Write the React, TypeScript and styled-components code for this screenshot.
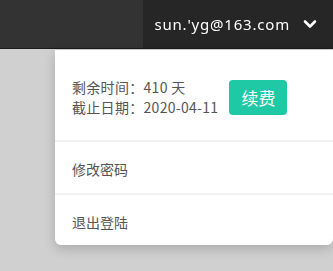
import styled, { createGlobalStyle } from 'styled-components';

const GlobalStyle = createGlobalStyle`
  html, body {
    margin: 0;
    padding: 0;
    background: #d0d0d0;
    font-family: "Noto Sans", "Noto Sans CJK SC", sans-serif;
  }
`;

const Page = styled.div`
  position: relative;
  width: 333px;
  height: 271px;
  background: #d0d0d0;
  overflow: hidden;
`;

const Header = styled.header`
  display: flex;
  height: 48px;
  border-bottom: 1px solid #1c1c1c;
`;

const HeaderLeft = styled.div`
  width: 143px;
  background: #333333;
`;

const UserArea = styled.div`
  flex: 1;
  display: flex;
  align-items: center;
  justify-content: flex-end;
  gap: 13px;
  padding-right: 16px;
  background: #262626;
  color: #fff;
`;

const Email = styled.span`
  font-size: 15px;
  letter-spacing: 0.8px;
  filter: blur(0.6px);
`;

const Dropdown = styled.div`
  position: absolute;
  top: 50px;
  left: 55px;
  right: 0;
  background: #fff;
  border-radius: 0 0 6px 6px;
  box-shadow: 0 4px 12px rgba(0, 0, 0, 0.18);
  font-family: "Noto Sans CJK SC", "Noto Sans", sans-serif;
  color: #555;
`;

const Info = styled.div`
  display: flex;
  align-items: center;
  gap: 11px;
  height: 92px;
  padding: 4px 0 0 17px;
  box-sizing: border-box;
  border-bottom: 2px solid #f2f2f2;
`;

const Lines = styled.div`
  font-size: 14px;
  line-height: 20px;
  letter-spacing: 0.3px;
`;

const RenewButton = styled.button`
  width: 58px;
  height: 35px;
  border: none;
  border-radius: 4px;
  background: #1fc9a5;
  color: #fff;
  font-family: inherit;
  font-size: 17px;
  padding: 0;
`;

const MenuItem = styled.div<{ last?: boolean }>`
  display: flex;
  align-items: center;
  box-sizing: border-box;
  height: ${({ last }) => (last ? 50 : 53)}px;
  padding: 3px 0 0 17px;
  font-size: 14px;
  border-bottom: ${({ last }) => (last ? 'none' : '2px solid #f2f2f2')};
`;

export default function App() {
  return (
    <Page>
      <GlobalStyle />
      <Header>
        <HeaderLeft />
        <UserArea>
          <Email>sun.'yg@163.com</Email>
          <svg width="14" height="10" viewBox="0 0 14 10">
            <polyline points="2,2.5 7,7.5 12,2.5" fill="none" stroke="#fff" strokeWidth="2.6" strokeLinecap="round" strokeLinejoin="round" />
          </svg>
        </UserArea>
      </Header>
      <Dropdown>
        <Info>
          <Lines>
            <div>剩余时间：410 天</div>
            <div>截止日期：2020-04-11</div>
          </Lines>
          <RenewButton>续费</RenewButton>
        </Info>
        <MenuItem>修改密码</MenuItem>
        <MenuItem last>退出登陆</MenuItem>
      </Dropdown>
    </Page>
  );
}
